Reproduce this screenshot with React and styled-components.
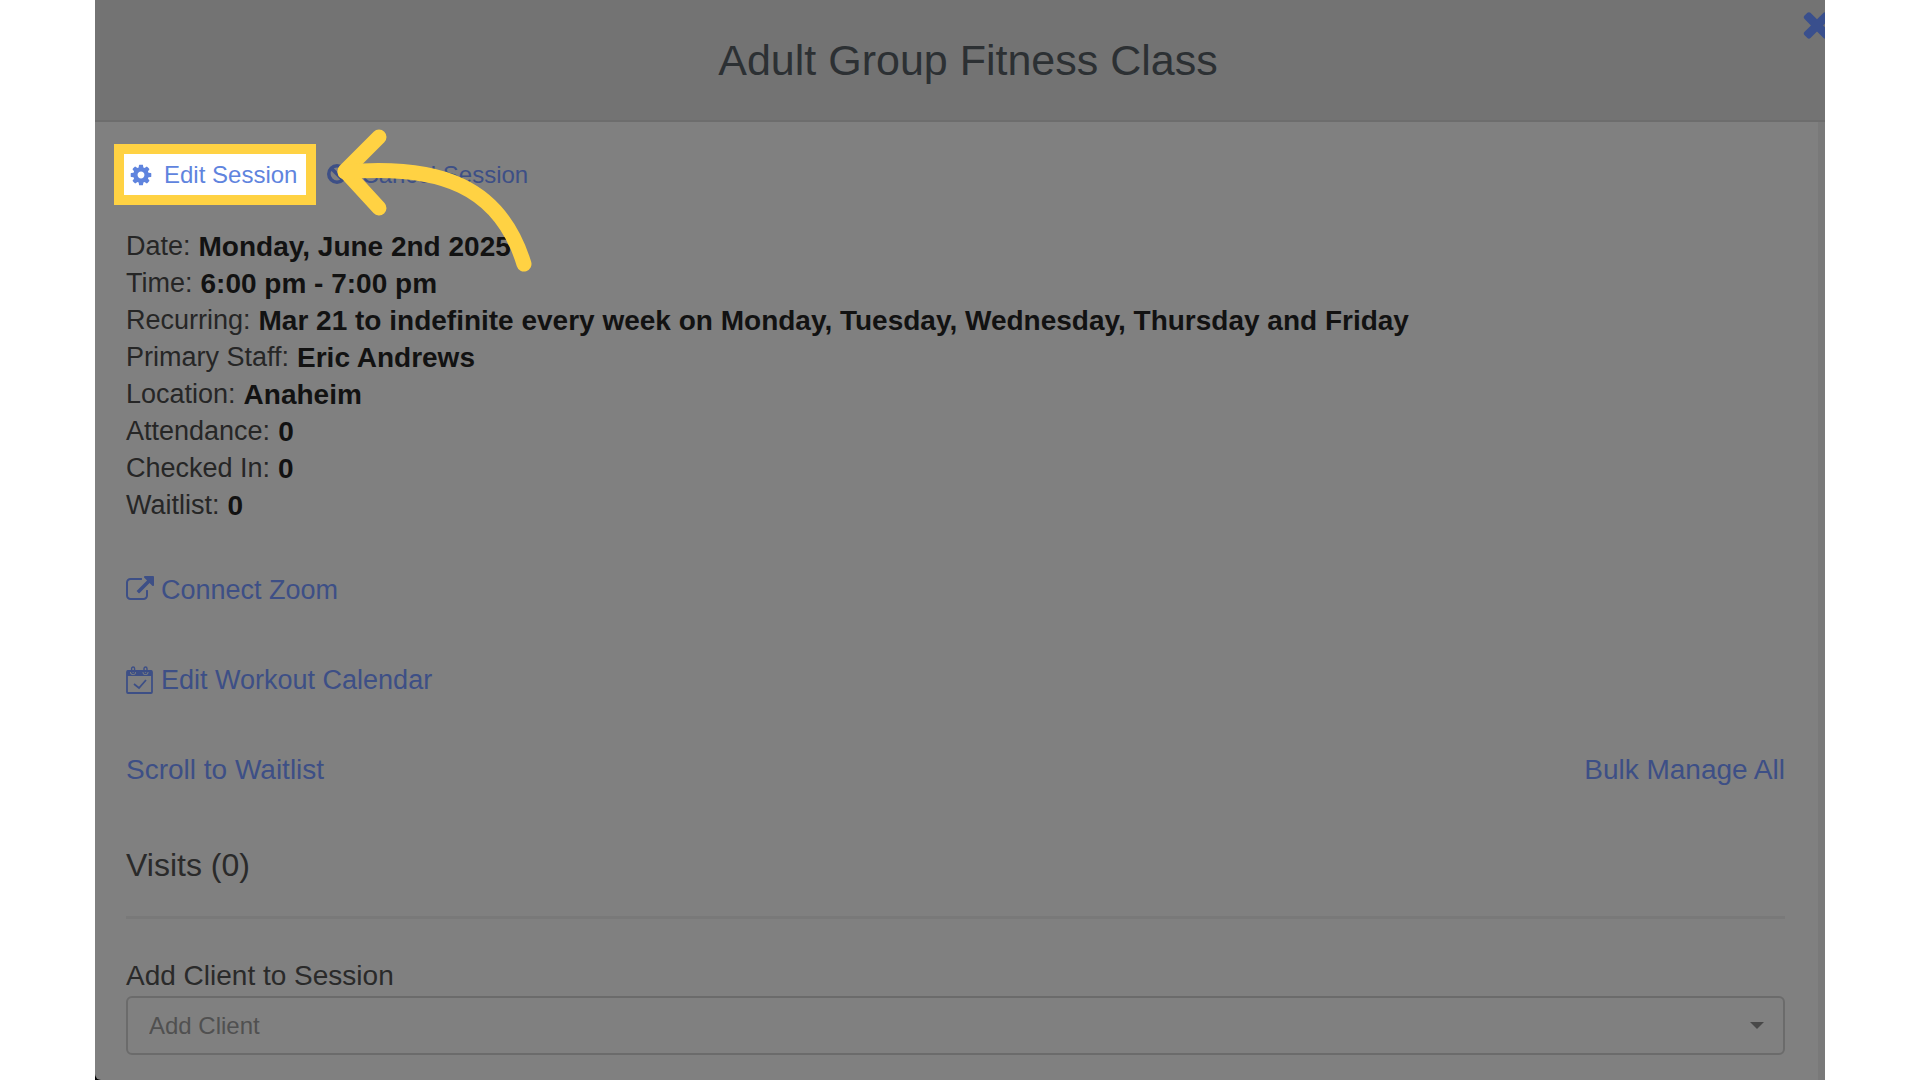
import React from "react";
import styled, { createGlobalStyle, ThemeProvider } from "styled-components";

const theme = {
  font: '"Liberation Sans", Arial, Helvetica, sans-serif',
  colors: {
    panel: "#808080",
    header: "#737373",
    line: "#797979",
    border: "#6b6b6b",
    link: "#3d4f86",
    linkBright: "#5f84de",
    text: "#121212",
    label: "#262626",
    title: "#2c3033",
    heading: "#2a2a2a",
    muted: "#505050",
    highlight: "#ffd243",
  },
};

const GlobalStyle = createGlobalStyle`
  * {
    box-sizing: border-box;
  }
  body {
    margin: 0;
    background: white;
    font-family: ${theme.font};
  }
`;

const Page = styled.div`
  min-height: 100vh;
  padding: 0 95px;
  display: flex;
`;

const Backdrop = styled.div`
  flex: 1;
  display: flex;
  position: relative;
  overflow: hidden;
  background: black;
`;

const Modal = styled.section`
  flex: 1;
  display: flex;
  flex-direction: column;
  background: ${({ theme }) => theme.colors.panel};
  border-bottom-left-radius: 6px;
`;

const Header = styled.header`
  position: relative;
  padding-left: 16px;
  background: ${({ theme }) => theme.colors.header};
  border-bottom: 2px solid #6d6d6d;
  text-align: center;

  h1 {
    margin: 0;
    font-size: 43px;
    font-weight: 300;
    line-height: 120px;
    color: ${({ theme }) => theme.colors.title};
  }
`;

const CloseButton = styled.button`
  position: absolute;
  top: 4px;
  right: -12px;
  padding: 0;
  border: none;
  background: none;
  color: #394f8d;
  cursor: pointer;

  svg {
    display: block;
  }
`;

const Content = styled.main`
  flex: 1;
  padding: 22px 33px 25px 31px;
  border-right: 7px solid ${({ theme }) => theme.colors.line};
`;

const Actions = styled.nav`
  display: flex;
  align-items: center;
  gap: 10px;
  margin-left: -12px;
`;

const ActionLink = styled.a`
  display: flex;
  align-items: center;
  gap: 11px;
  font-size: 24px;
  line-height: 41px;
  text-decoration: none;
  color: ${({ theme, $active }) =>
    $active ? theme.colors.linkBright : theme.colors.link};
  ${({ theme, $active }) =>
    $active &&
    `
    padding: 0 9px 0 5px;
    background: white;
    border: 10px solid ${theme.colors.highlight};
  `}
`;

const Details = styled.dl`
  margin: 23px 0 48px;
  font-size: 28px;
  line-height: 37px;

  div {
    display: flex;
    gap: 8px;
  }
  dt {
    font-size: 27px;
    color: ${({ theme }) => theme.colors.label};
  }
  dd {
    margin: 0;
    font-weight: bold;
    color: ${({ theme }) => theme.colors.text};
  }
`;

const Links = styled.div`
  display: flex;
  flex-direction: column;
  align-items: flex-start;
  gap: 54px;
`;

const TextLink = styled.a`
  display: flex;
  align-items: center;
  gap: 7px;
  font-size: ${({ $large }) => ($large ? "28px" : "27px")};
  line-height: 36px;
  text-decoration: none;
  color: ${({ theme }) => theme.colors.link};
`;

const LinkRow = styled.div`
  align-self: stretch;
  display: flex;
  justify-content: space-between;
`;

const SectionTitle = styled.h2`
  margin: 59px 0 39px;
  padding-bottom: 33px;
  border-bottom: 3px solid ${({ theme }) => theme.colors.line};
  font-size: 32px;
  font-weight: 500;
  line-height: 36px;
  color: ${({ theme }) => theme.colors.heading};
`;

const Field = styled.div`
  position: relative;

  label {
    display: block;
    margin-bottom: 2px;
    font-size: 28px;
    line-height: 36px;
    color: ${({ theme }) => theme.colors.heading};
  }
  select {
    display: block;
    width: 100%;
    height: 59px;
    padding: 0 21px;
    appearance: none;
    background: transparent;
    border: 2px solid ${({ theme }) => theme.colors.border};
    border-radius: 6px;
    font-family: inherit;
    font-size: 24px;
    color: ${({ theme }) => theme.colors.muted};
  }
  svg {
    position: absolute;
    right: 21px;
    bottom: 26px;
    pointer-events: none;
  }
`;

// Sits over the action links, pointing at the highlighted one
const Arrow = styled.svg`
  position: absolute;
  top: 120px;
  left: 235px;
  pointer-events: none;
`;

const Icon = ({ size, children }) => (
  <svg
    width={size}
    height={size}
    viewBox="0 0 1792 1792"
    fill="currentColor"
    aria-hidden="true"
  >
    {children}
  </svg>
);

const CogIcon = () => (
  <Icon size={24}>
    <path d="M1152 896q0-106-75-181t-181-75-181 75-75 181 75 181 181 75 181-75 75-181zm512-109v222q0 12-8 23t-20 13l-185 28q-19 54-39 91 35 50 107 138 10 12 10 25t-9 23q-27 37-99 108t-94 71q-12 0-26-9l-138-108q-44 23-91 38-16 136-29 186-7 28-36 28h-222q-14 0-24.5-8.5t-11.5-21.5l-28-184q-49-16-90-37l-141 107q-10 9-25 9-14 0-25-11-126-114-165-168-7-10-7-23 0-12 8-23 15-21 51-66.5t54-70.5q-27-50-41-99l-183-27q-13-2-21-12.5t-8-23.5v-222q0-12 8-23t19-13l186-28q14-46 39-92-40-57-107-138-10-12-10-24 0-10 9-23 26-36 98.5-107.5t94.5-71.5q13 0 26 10l138 107q44-23 91-38 16-136 29-186 7-28 36-28h222q14 0 24.5 8.5t11.5 21.5l28 184q49 16 90 37l142-107q9-9 24-9 13 0 25 10 129 119 165 170 7 8 7 22 0 12-8 23-15 21-51 66.5t-54 70.5q26 50 41 98l183 28q13 2 21 12.5t8 23.5z" />
  </Icon>
);

const BanIcon = () => (
  <svg
    width="24"
    height="24"
    viewBox="0 0 24 24"
    fill="none"
    stroke="currentColor"
    strokeWidth="3.6"
    aria-hidden="true"
  >
    <circle cx="11" cy="11" r="8.2" />
    <path d="M5 5l12 12" />
  </svg>
);

const CloseIcon = () => (
  <Icon size={40}>
    <path d="M1490 1322q0 40-28 68l-136 136q-28 28-68 28t-68-28l-294-294-294 294q-28 28-68 28t-68-28l-136-136q-28-28-28-68t28-68l294-294-294-294q-28-28-28-68t28-68l136-136q28-28 68-28t68 28l294 294 294-294q28-28 68-28t68 28l136 136q28 28 28 68t-28 68l-294 294 294 294q28 28 28 68z" />
  </Icon>
);

const ExternalIcon = () => (
  <Icon size={28}>
    <path d="M1408 928v320q0 119-84.5 203.5t-203.5 84.5h-832q-119 0-203.5-84.5t-84.5-203.5v-832q0-119 84.5-203.5t203.5-84.5h704q14 0 23 9t9 23v64q0 14-9 23t-23 9h-704q-66 0-113 47t-47 113v832q0 66 47 113t113 47h832q66 0 113-47t47-113v-320q0-14 9-23t23-9h64q14 0 23 9t9 23zm384-864v512q0 26-19 45t-45 19-45-19l-176-176-652 652q-10 10-23 10t-23-10l-114-114q-10-10-10-23t10-23l652-652-176-176q-19-19-19-45t19-45 45-19h512q26 0 45 19t19 45z" />
  </Icon>
);

const CalendarIcon = () => (
  <svg
    width="28"
    height="28"
    viewBox="0 0 28 28"
    fill="none"
    stroke="currentColor"
    strokeWidth="1.8"
    aria-hidden="true"
  >
    <rect x="1" y="5" width="25" height="22" rx="1" />
    <path
      d="M1 4.5h3V6a3 3 0 0 0 6 0V4.5h6.500V6a3 3 0 0 0 6 0V4.500H26V10H1z"
      fill="currentColor"
      stroke="none"
    />
    <rect x="5.600" y="1" width="3" height="6.500" rx="1.500" strokeWidth="1.400" />
    <rect x="18" y="1" width="3" height="6.500" rx="1.500" strokeWidth="1.400" />
    <path d="M8 18l5 4 7-8" />
  </svg>
);

const details = [
  ["Date:", "Monday, June 2nd 2025"],
  ["Time:", "6:00 pm - 7:00 pm"],
  [
    "Recurring:",
    "Mar 21 to indefinite every week on Monday, Tuesday, Wednesday, Thursday and Friday",
  ],
  ["Primary Staff:", "Eric Andrews"],
  ["Location:", "Anaheim"],
  ["Attendance:", "0"],
  ["Checked In:", "0"],
  ["Waitlist:", "0"],
];

const App = () => {
  return (
    <ThemeProvider theme={theme}>
      <GlobalStyle />
      <Page>
        <Backdrop>
          <Modal>
            <Header>
              <h1>Adult Group Fitness Class</h1>
              <CloseButton type="button" aria-label="Close">
                <CloseIcon />
              </CloseButton>
            </Header>
            <Content>
              <Actions>
                <ActionLink href="#edit" $active>
                  <CogIcon />
                  Edit Session
                </ActionLink>
                <ActionLink href="#cancel">
                  <BanIcon />
                  Cancel Session
                </ActionLink>
              </Actions>
              <Details>
                {details.map(([label, value]) => (
                  <div key={label}>
                    <dt>{label}</dt>
                    <dd>{value}</dd>
                  </div>
                ))}
              </Details>
              <Links>
                <TextLink href="#zoom">
                  <ExternalIcon />
                  Connect Zoom
                </TextLink>
                <TextLink href="#calendar">
                  <CalendarIcon />
                  Edit Workout Calendar
                </TextLink>
                <LinkRow>
                  <TextLink href="#waitlist" $large>
                    Scroll to Waitlist
                  </TextLink>
                  <TextLink href="#bulk" $large>
                    Bulk Manage All
                  </TextLink>
                </LinkRow>
              </Links>
              <SectionTitle>Visits (0)</SectionTitle>
              <Field>
                <label htmlFor="client">Add Client to Session</label>
                <select id="client">
                  <option>Add Client</option>
                </select>
                <svg width="14" height="7" viewBox="0 0 14 7" aria-hidden="true">
                  <path d="M0 0h14L7 7z" fill="#484848" />
                </svg>
              </Field>
            </Content>
          </Modal>
          <Arrow
            width="210"
            height="160"
            viewBox="0 0 210 160"
            fill="none"
            stroke={theme.colors.highlight}
            strokeWidth="15"
            strokeLinecap="round"
            strokeLinejoin="round"
            aria-hidden="true"
          >
            <path d="M49 17L15 51l34 37" />
            <path d="M15 52C110 44 170 66 194 144" />
          </Arrow>
        </Backdrop>
      </Page>
    </ThemeProvider>
  );
};

export default App;
